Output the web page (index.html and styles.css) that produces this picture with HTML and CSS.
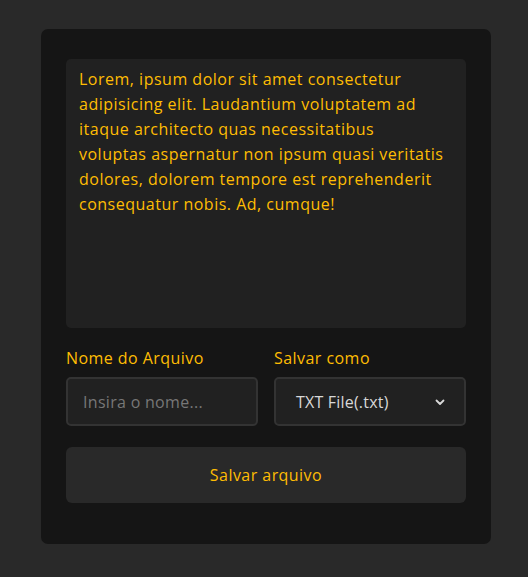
FILE: index.html
```html
<!DOCTYPE html>
<html lang="pt">
<head>
<meta charset="utf-8">
<link rel="stylesheet" href="styles.css">
</head>
<body>
<main class="card">
  <div class="editor">Lorem, ipsum dolor sit amet consectetur<br>adipisicing elit. Laudantium voluptatem ad<br>itaque architecto quas necessitatibus<br>voluptas aspernatur non ipsum quasi veritatis<br>dolores, dolorem tempore est reprehenderit<br>consequatur nobis. Ad, cumque!</div>
  <div class="fields">
    <div class="field">
      <label class="label">Nome do Arquivo</label>
      <div class="input"><span class="placeholder">Insira o nome...</span></div>
    </div>
    <div class="field">
      <label class="label">Salvar como</label>
      <div class="input select">
        <span class="value">TXT File(.txt)</span>
        <svg class="chev" width="10" height="8" viewBox="0 0 10 8"><path d="M1.5 2.5 L5 6 L8.5 2.5" fill="none" stroke="#d8d8d8" stroke-width="1.8" stroke-linecap="round" stroke-linejoin="round"/></svg>
      </div>
    </div>
  </div>
  <button class="save">Salvar arquivo</button>
</main>
</body>
</html>
```
FILE: styles.css
```css
* { box-sizing: border-box; }
html, body { margin: 0; }
body {
  background: #292929;
  font-family: "Open Sans", "Noto Sans", sans-serif;
  width: 528px;
  height: 577px;
  overflow: hidden;
  padding-top: 29px;
  padding-left: 41px;
}
.card {
  width: 450px;
  height: 515px;
  background: #151515;
  border-radius: 7px;
  padding: 30px 25px;
}
.editor {
  height: 269px;
  background: #212121;
  border-radius: 5px;
  padding: 8px 13px;
  color: #ffbd03;
  font-size: 16px;
  letter-spacing: 0.5px;
  line-height: 25px;
  white-space: nowrap;
}
.fields {
  display: grid;
  grid-template-columns: 1fr 1fr;
  gap: 16px;
  margin-top: 20px;
}
.field { display: flex; flex-direction: column; }
.label {
  color: #ffbd03;
  font-size: 16px;
  letter-spacing: 0.45px;
  line-height: 20px;
  margin-bottom: 9px;
}
.input {
  height: 49px;
  border: 2px solid #333;
  border-radius: 5px;
  background: #212121;
  display: flex;
  align-items: center;
  padding: 0 15px;
  font-size: 16px;
  letter-spacing: 0.3px;
}
.placeholder { color: #777; }
.select { padding: 0 20px; justify-content: space-between; }
.value { color: #d8d8d8; font-size: 16px; letter-spacing: 0.2px; }
.chev { margin-right: -1px; }
.save {
  display: block;
  width: 100%;
  height: 56px;
  margin-top: 21px;
  border: none;
  border-radius: 6px;
  background: #292929;
  color: #ffbd03;
  font-family: inherit;
  font-size: 16px;
  letter-spacing: 0.45px;
}
```
